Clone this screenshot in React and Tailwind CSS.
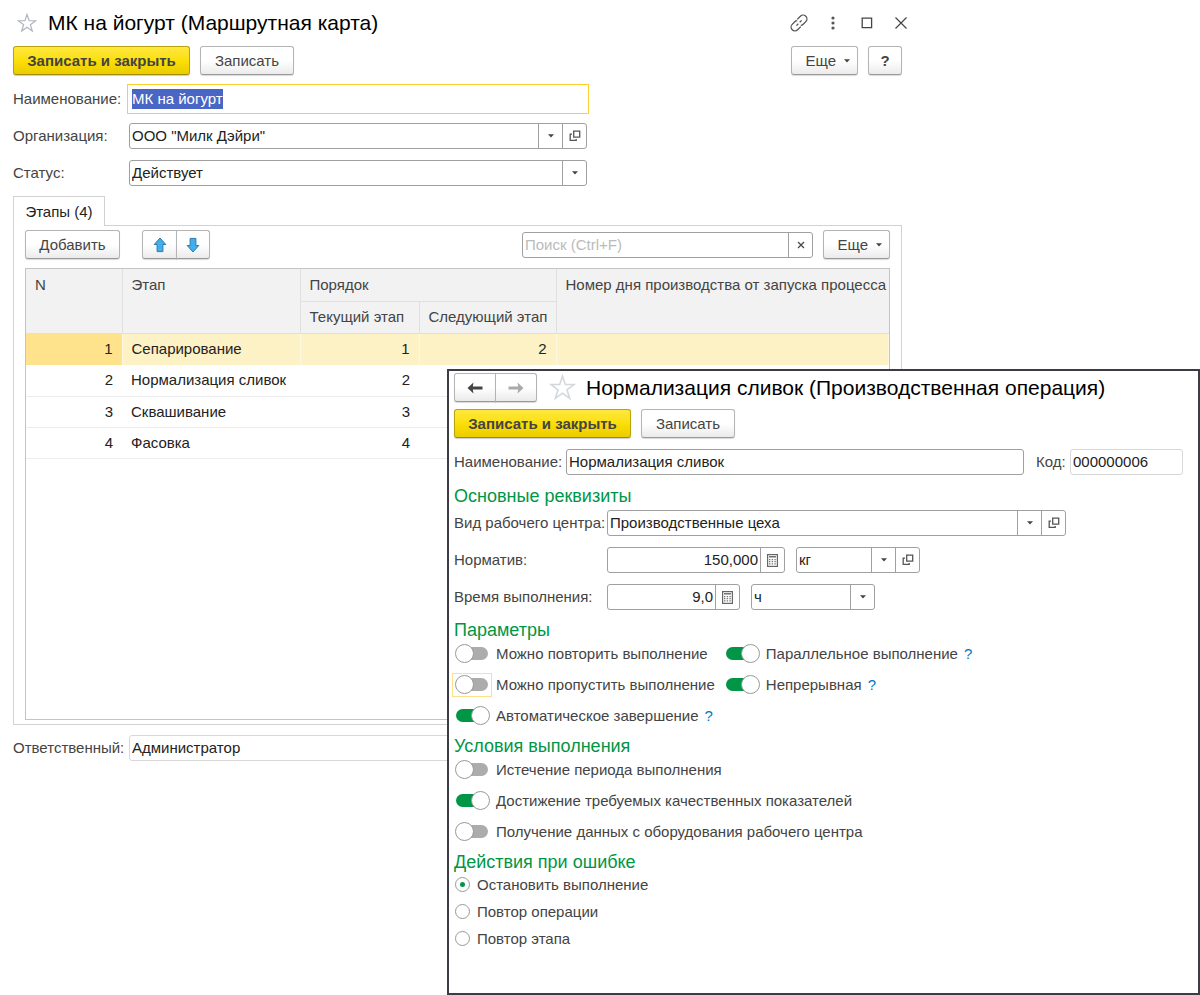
import React, { useEffect, useRef } from "react";

const stages = [
    { n: 1, name: "Сепарирование", current: 1, next: 2 },
    { n: 2, name: "Нормализация сливок", current: 2 },
    { n: 3, name: "Сквашивание", current: 3 },
    { n: 4, name: "Фасовка", current: 4 },
];

const errorActions = ["Остановить выполнение", "Повтор операции", "Повтор этапа"];

function Caret() {
    return (
        <svg width="6" height="4" viewBox="0 0 6 4" aria-hidden="true">
            <path d="M0 0.2h6L3 3.6z" fill="#444" />
        </svg>
    );
}

function OpenIcon() {
    return (
        <svg width="12" height="12" viewBox="0 0 12 12" fill="none" stroke="#555" strokeWidth="1.3" aria-hidden="true">
            <path d="M4.7 1.2h6v6h-6z" />
            <path d="M3 4.2H1.2v6.2h6V9" />
        </svg>
    );
}

function CalcIcon() {
    return (
        <svg width="11" height="13" viewBox="0 0 11 13" aria-hidden="true">
            <rect x="0.6" y="0.6" width="9.8" height="11.8" fill="#fff" stroke="#666" strokeWidth="1.2" />
            <path d="M2 2.8h7" stroke="#666" strokeWidth="1.4" />
            <path d="M2 5.6h7M2 7.7h7M2 9.8h7" stroke="#777" strokeWidth="1.2" strokeDasharray="1.4 1.3" />
        </svg>
    );
}

function Star({ size, color }) {
    return (
        <svg width={size} height={size} viewBox="0 0 24 24" fill="none" stroke={color} strokeWidth="1.4" aria-hidden="true">
            <path d="M12 1.8l2.5 7.5h7.9l-6.4 4.7 2.4 7.7-6.4-4.7-6.4 4.7L8 14 1.6 9.3h7.9z" />
        </svg>
    );
}

function LinkIcon() {
    return (
        <svg width="18" height="18" viewBox="0 0 18 18" fill="none" stroke="#555" strokeWidth="1.3" aria-hidden="true">
            <path d="M7.2 5.4l3.2-3.2a3.8 3.8 0 0 1 5.4 5.4l-2.6 2.6a3.6 3.6 0 0 1-2.4 1.1" />
            <path d="M10.8 12.6l-3.200 3.200a3.800 3.800 0 0 1-5.400-5.400l2.600-2.600a3.600 3.600 0 0 1 2.400-1.100" />
            <path d="M6.4 11.6l1.9-1.900M9.700 8.300l1.900-1.900" />
        </svg>
    );
}

function StageArrow({ down }) {
    return (
        <svg width="14" height="16" viewBox="0 0 14 16" className={down ? "rotate-180" : ""} aria-hidden="true">
            <path d="M7 1l5.800 6.500H9.900V14.600H4.100V7.500H1.200z" fill="#42aeea" stroke="#2a7db0" strokeWidth="1" strokeLinejoin="round" />
        </svg>
    );
}

function NavArrow({ color, forward }) {
    return (
        <svg width="16" height="12" viewBox="0 0 16 12" className={forward ? "rotate-180" : ""} aria-hidden="true">
            <path d="M0.500 6L6.500 0.500 5.800 4.600H15.500v2.800H5.800l.7 4.100z" fill={color} />
        </svg>
    );
}

function Button({ children, className = "", ...rest }) {
    return (
        <button
            type="button"
            className={`h-[29px] rounded-[3px] border border-[#b4b4b4] border-b-[#999] bg-linear-to-b from-white from-50% to-[#ebebeb] text-[#444] shadow-[0_1px_1px_rgba(0,0,0,0.15)] ${className}`}
            {...rest}
        >
            {children}
        </button>
    );
}

function SaveButtons() {
    return (
        <div className="flex gap-[10px]">
            <button
                type="button"
                className="h-[29px] w-[177px] rounded-[3px] border border-[#b8a210] border-b-[#a08c00] bg-linear-to-b from-[#ffe83a] via-[#fbdf05] to-[#ebcc00] font-bold text-[#444] shadow-[0_1px_1px_rgba(0,0,0,0.2)]"
            >
                Записать и закрыть
            </button>
            <Button className="w-[94px]">Записать</Button>
        </div>
    );
}

function MoreButton() {
    return (
        <Button className="flex w-[67px] items-center justify-end gap-2 pr-[7px]">
            Еще <Caret />
        </Button>
    );
}

function Box({ children, className = "rounded-[3px] border-[#a0a0a0]" }) {
    return (
        <div className={`flex h-[26px] border bg-white text-[#222] ${className}`}>
            {children}
        </div>
    );
}

function TextInput({ className = "", ...rest }) {
    return <input type="text" className={`min-w-0 flex-1 px-[2px] outline-none ${className}`} {...rest} />;
}

function Segment({ children, label }) {
    return (
        <button type="button" aria-label={label} className="flex w-6 shrink-0 items-center justify-center border-l border-[#a0a0a0]">
            {children}
        </button>
    );
}

// the arrow cell lies over the select's right edge and lets clicks through
function Dropdown({ id, value, label }) {
    return (
        <div className="relative flex min-w-0 flex-1">
            <select id={id} aria-label={label} defaultValue={value} className="min-w-0 flex-1 appearance-none bg-transparent pr-6 pl-[2px] outline-none">
                <option>{value}</option>
            </select>
            <span className="pointer-events-none absolute inset-y-0 right-0 flex w-6 items-center justify-center border-l border-[#a0a0a0]">
                <Caret />
            </span>
        </div>
    );
}

function Toggle({ label, on, hint, focused }) {
    return (
        <div className="flex h-[31px] items-center">
            <label className="flex items-center">
                <span className={`-ml-[2px] mr-1 flex h-6 w-10 items-center justify-center border ${focused ? "border-[#ffe08a]" : "border-transparent"}`}>
                    <input
                        type="checkbox"
                        role="switch"
                        defaultChecked={on}
                        className="relative flex h-5 w-[34px] appearance-none items-center before:ml-[1px] before:h-[13px] before:w-8 before:rounded-full before:bg-[#acacac] after:absolute after:left-0 after:size-[19px] after:rounded-full after:border after:border-[#999] after:bg-white checked:before:bg-[#009646] checked:after:-right-px checked:after:left-auto"
                    />
                </span>
                {label}
            </label>
            {hint && (
                <a href="#help" className="ml-[6px] text-[#0078c8]">?</a>
            )}
        </div>
    );
}

function SectionTitle({ children }) {
    return <h2 className="text-lg leading-6 text-[#009646]">{children}</h2>;
}

function RouteCard() {
    const nameRef = useRef(null);

    useEffect(() => {
        nameRef.current.focus();
        nameRef.current.select();
    }, []);

    return (
        <main className="mr-[298px] ml-[13px]">
            <header className="flex h-[46px] items-center justify-between">
                <div className="flex items-center gap-[11px]">
                    <button type="button" aria-label="В избранное" className="ml-1">
                        <Star size={20} color="#b0b4bc" />
                    </button>
                    <h1 className="text-[21px] text-black">МК на йогурт (Маршрутная карта)</h1>
                </div>
                <div className="-mr-4 flex items-center">
                    <button type="button" aria-label="Ссылка" className="flex w-[35px] justify-center"><LinkIcon /></button>
                    <button type="button" aria-label="Меню" className="flex w-[34px] justify-center">
                        <svg width="4" height="14" viewBox="0 0 4 14" fill="#555">
                            <circle cx="2" cy="2" r="1.600" /><circle cx="2" cy="7" r="1.600" /><circle cx="2" cy="12" r="1.600" />
                        </svg>
                    </button>
                    <button type="button" aria-label="Развернуть" className="flex w-[34px] justify-center">
                        <svg width="12" height="12" viewBox="0 0 12 12" fill="none" stroke="#444" strokeWidth="1.300"><path d="M1.200 1.200h9.400v9.400H1.200z" /></svg>
                    </button>
                    <button type="button" aria-label="Закрыть" className="flex w-[34px] justify-center">
                        <svg width="12" height="12" viewBox="0 0 12 12" stroke="#444" strokeWidth="1.200"><path d="M0.500 0.500l11 11M11.500 0.500l-11 11" /></svg>
                    </button>
                </div>
            </header>

            <div className="flex justify-between">
                <SaveButtons />
                <div className="flex gap-[10px]">
                    <MoreButton />
                    <Button className="w-[34px] font-bold">?</Button>
                </div>
            </div>

            <div className="mt-[11px] mr-[315px] grid grid-cols-[116px_1fr] items-center gap-y-[11px]">
                <label htmlFor="card-name">Наименование:</label>
                <Box className="border-transparent outline outline-offset-1 outline-[#ffd02e]">
                    <input
                        id="card-name"
                        type="text"
                        ref={nameRef}
                        defaultValue="МК на йогурт"
                        className="min-w-0 flex-1 px-[2px] outline-none selection:bg-[#4a66c4] selection:text-white"
                    />
                </Box>
                <label htmlFor="card-org">Организация:</label>
                <Box>
                    <Dropdown id="card-org" value={'ООО "Милк Дэйри"'} />
                    <Segment label="Открыть организацию"><OpenIcon /></Segment>
                </Box>
                <label htmlFor="card-status">Статус:</label>
                <Box>
                    <Dropdown id="card-status" value="Действует" />
                </Box>
            </div>

            <div role="tablist" className="mt-[10px] flex">
                <button type="button" role="tab" aria-selected="true" className="relative z-10 -mb-px h-[30px] w-[92px] border border-b-0 border-[#d2d2d2] bg-white text-[#222]">
                    Этапы (4)
                </button>
            </div>
            <section className="border border-[#d2d2d2] px-[11px] pt-1 pb-1">
                <div className="flex items-center justify-between">
                    <div className="flex">
                        <Button className="w-[95px]">Добавить</Button>
                        <div className="ml-[22px] flex">
                            <Button className="flex w-[35px] items-center justify-center rounded-r-none" aria-label="Вверх"><StageArrow /></Button>
                            <Button className="-ml-px flex w-[34px] items-center justify-center rounded-l-none" aria-label="Вниз"><StageArrow down /></Button>
                        </div>
                    </div>
                    <div className="flex items-center gap-[10px]">
                        <Box className="w-[291px] rounded-[3px] border-[#a0a0a0]">
                            <TextInput aria-label="Поиск" placeholder="Поиск (Ctrl+F)" className="placeholder:text-[#bbb]" />
                            <Segment label="Очистить">
                                <svg width="8" height="8" viewBox="0 0 8 8" stroke="#444" strokeWidth="1.200"><path d="M1 1l6 6M7 1L1 7" /></svg>
                            </Segment>
                        </Box>
                        <MoreButton />
                    </div>
                </div>

                <div className="mt-[9px] min-h-[452px] border border-[#c4c4c4]">
                    <table className="w-full table-fixed border-collapse text-[#222]">
                        <colgroup>
                            <col className="w-24" />
                            <col className="w-[178px]" />
                            <col className="w-[119px]" />
                            <col className="w-[137px]" />
                            <col />
                        </colgroup>
                        <thead className="bg-[#f2f2f2] text-left text-[#444] [&_th]:border-[#e0e0e0] [&_th]:px-[9px] [&_th]:font-normal [&_th]:whitespace-nowrap">
                            <tr className="h-8">
                                <th rowSpan={2} className="border-r border-b pt-[6px] align-top">N</th>
                                <th rowSpan={2} className="border-r border-b pt-[6px] align-top">Этап</th>
                                <th colSpan={2} className="border-r border-b">Порядок</th>
                                <th rowSpan={2} className="border-b pt-[6px] align-top">Номер дня производства от запуска процесса</th>
                            </tr>
                            <tr className="h-8">
                                <th className="border-r border-b">Текущий этап</th>
                                <th className="border-r border-b">Следующий этап</th>
                            </tr>
                        </thead>
                        <tbody>
                            {stages.map(s => (
                                <tr
                                    key={s.n}
                                    className={s.n === 1
                                        ? "h-8 bg-[#fdf1c6] [&>td]:border-r [&>td]:border-[#fff8e0]"
                                        : "h-[31px] border-b border-[#ececec]"}
                                >
                                    <td className={`px-[9px] text-right ${s.n === 1 ? "bg-[#ffe38c]" : ""}`}>{s.n}</td>
                                    <td className="px-[9px]">{s.name}</td>
                                    <td className="px-[9px] text-right">{s.current}</td>
                                    <td className="px-[9px] text-right">{s.next}</td>
                                    <td></td>
                                </tr>
                            ))}
                        </tbody>
                    </table>
                </div>
            </section>

            <div className="mt-[10px] mr-[315px] grid grid-cols-[116px_1fr] items-center">
                <label htmlFor="card-owner">Ответственный:</label>
                <Box className="rounded-[3px] border-[#d8d8d8]">
                    <TextInput id="card-owner" defaultValue="Администратор" />
                </Box>
            </div>
        </main>
    );
}

function OperationWindow() {
    return (
        <section className="absolute top-[369px] right-0 left-[447px] border-2 border-[#3c3c44] bg-white pt-[2px] pr-[15px] pb-[41px] pl-[5px]">
            <header className="flex items-center">
                <div className="flex">
                    <Button className="flex w-[42px] items-center justify-center rounded-r-none" aria-label="Назад"><NavArrow color="#444" /></Button>
                    <Button className="-ml-px flex w-[42px] items-center justify-center rounded-l-none" aria-label="Вперед"><NavArrow color="#aaa" forward /></Button>
                </div>
                <button type="button" aria-label="В избранное" className="ml-3">
                    <Star size={27} color="#d4d7dc" />
                </button>
                <h1 className="ml-[10px] text-[21px] text-black">Нормализация сливок (Производственная операция)</h1>
            </header>

            <div className="mt-[7px]">
                <SaveButtons />
            </div>

            <div className="mt-[11px] flex items-center">
                <label htmlFor="op-name" className="w-[112px] shrink-0">Наименование:</label>
                <Box className="flex-1 rounded-[3px] border-[#a0a0a0]">
                    <TextInput id="op-name" defaultValue="Нормализация сливок" />
                </Box>
                <label htmlFor="op-code" className="ml-3 w-[34px] shrink-0">Код:</label>
                <Box className="w-[113px] rounded-[3px] border-[#d8d8d8]">
                    <TextInput id="op-code" defaultValue="000000006" />
                </Box>
            </div>

            <div className="mt-[9px]">
                <SectionTitle>Основные реквизиты</SectionTitle>
                <div className="mt-[2px] grid grid-cols-[153px_1fr] items-center gap-y-[11px]">
                    <label htmlFor="op-center">Вид рабочего центра:</label>
                    <Box className="mr-[117px] rounded-[3px] border-[#a0a0a0]">
                        <Dropdown id="op-center" value="Производственные цеха" />
                        <Segment label="Открыть вид рабочего центра"><OpenIcon /></Segment>
                    </Box>
                    <label htmlFor="op-norm">Норматив:</label>
                    <div className="flex gap-[11px]">
                        <Box className="w-[178px] rounded-[3px] border-[#a0a0a0]">
                            <TextInput id="op-norm" defaultValue="150,000" className="text-right" />
                            <Segment label="Калькулятор"><CalcIcon /></Segment>
                        </Box>
                        <Box className="w-[124px] rounded-[3px] border-[#a0a0a0]">
                            <Dropdown label="Единица измерения" value="кг" />
                            <Segment label="Открыть единицу"><OpenIcon /></Segment>
                        </Box>
                    </div>
                    <label htmlFor="op-time">Время выполнения:</label>
                    <div className="flex gap-[11px]">
                        <Box className="w-[133px] rounded-[3px] border-[#a0a0a0]">
                            <TextInput id="op-time" defaultValue="9,0" className="text-right" />
                            <Segment label="Калькулятор"><CalcIcon /></Segment>
                        </Box>
                        <Box className="w-[124px] rounded-[3px] border-[#a0a0a0]">
                            <Dropdown label="Единица времени" value="ч" />
                        </Box>
                    </div>
                </div>
            </div>

            <div className="mt-2">
                <SectionTitle>Параметры</SectionTitle>
                <div className="-mt-1 flex gap-[9px]">
                    <div>
                        <Toggle label="Можно повторить выполнение" />
                        <Toggle label="Можно пропустить выполнение" focused />
                        <Toggle label="Автоматическое завершение" on hint />
                    </div>
                    <div>
                        <Toggle label="Параллельное выполнение" on hint />
                        <Toggle label="Непрерывная" on hint />
                    </div>
                </div>
            </div>

            <div className="mt-[3px]">
                <SectionTitle>Условия выполнения</SectionTitle>
                <div className="-mt-1">
                    <Toggle label="Истечение периода выполнения" />
                    <Toggle label="Достижение требуемых качественных показателей" on />
                    <Toggle label="Получение данных с оборудования рабочего центра" />
                </div>
            </div>

            <fieldset className="mt-[3px]">
                <legend className="text-lg leading-6 text-[#009646]">Действия при ошибке</legend>
                <div className="-mt-[3px]">
                    {errorActions.map((action, i) => (
                        <label key={action} className="flex h-[27px] items-center gap-[7px]">
                            <input
                                type="radio"
                                name="error-action"
                                defaultChecked={i === 0}
                                className="ml-[1px] grid size-[15px] appearance-none place-items-center rounded-full border border-[#999] before:size-[5px] before:rounded-full checked:before:bg-[#009646]"
                            />
                            {action}
                        </label>
                    ))}
                </div>
            </fieldset>
        </section>
    );
}

export default function App() {
    return (
        <div className="relative min-h-screen bg-white font-['Liberation_Sans',Arial,sans-serif] text-[15px] leading-5 text-[#444]">
            <RouteCard />
            <OperationWindow />
        </div>
    );
}
